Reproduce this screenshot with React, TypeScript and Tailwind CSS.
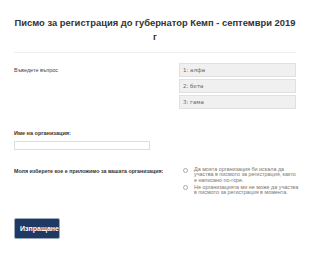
import { useState } from "react";

const options = ["1: алфа", "2: бета", "3: гама"];

const answers = [
  "Да моята организация би искала да участва в писмото за регистрация, както е написано по-горе.",
  "Не организацията ми не може да участва в писмото за регистрация в момента.",
];

export default function App() {
  const [choice, setChoice] = useState<string | null>(null);

  return (
    <div
      className="w-[310px] h-[254px] overflow-hidden bg-white px-[14px] text-[#333]"
      style={{ fontFamily: '"Liberation Sans", Arial, sans-serif' }}
    >
      <h1 className="pt-[16px] text-center text-[9.4px] font-bold leading-[14px] text-[#333]">
        Писмо за регистрация до губернатор Кемп - септември 2019 г
      </h1>
      <div className="mt-[8px] h-px bg-[#eee]" />

      {/* question */}
      <div className="mt-[10px] flex">
        <div className="w-[165px] pt-[3px] text-[5.5px] text-[#444]">Въведете въпрос</div>
        <div className="flex flex-1 flex-col gap-[2px]">
          {options.map((o) => (
            <div
              key={o}
              className="flex h-[14px] items-center border border-[#e0e0e0] bg-[#f0f0f0] pl-[3px] text-[5.5px] text-[#666]"
              style={{ fontFamily: '"DejaVu Sans", sans-serif' }}
            >
              {o}
            </div>
          ))}
        </div>
      </div>

      {/* organisation */}
      <div className="mt-[20px] text-[5.5px] font-bold text-[#333]">Име на организация:</div>
      <input className="mt-[4px] block h-[9px] w-[136px] border border-[#ddd] bg-white" />

      {/* applicability */}
      <div className="mt-[17px] flex">
        <div className="w-[168px] shrink-0 pt-[1px] text-[5.3px] font-bold text-[#333]">
          Моля изберете кое е приложимо за вашата организация:
        </div>
        <div className="flex flex-col gap-[2px]">
          {answers.map((t) => (
            <label key={t} className="flex cursor-pointer items-start gap-[3px]">
              <span
                onClick={() => setChoice(t)}
                className="mt-[0.5px] ml-[1px] flex h-[5px] w-[5px] shrink-0 items-center justify-center rounded-full border border-[#aaa] bg-white"
              >
                {choice === t && <span className="h-[2px] w-[2px] rounded-full bg-[#333]" />}
              </span>
              <span className="w-[107.5px] shrink-0 pl-[3px] text-[5.4px] leading-[5.2px] text-[#777]">{t}</span>
            </label>
          ))}
        </div>
      </div>

      <button className="mt-[23px] block h-[21px] w-[46px] overflow-visible whitespace-nowrap rounded-[2px] border border-[#9ab] bg-[#1f3864] pl-[5px] text-left text-[7px] font-bold text-white">
        Изпращане
      </button>
    </div>
  );
}
